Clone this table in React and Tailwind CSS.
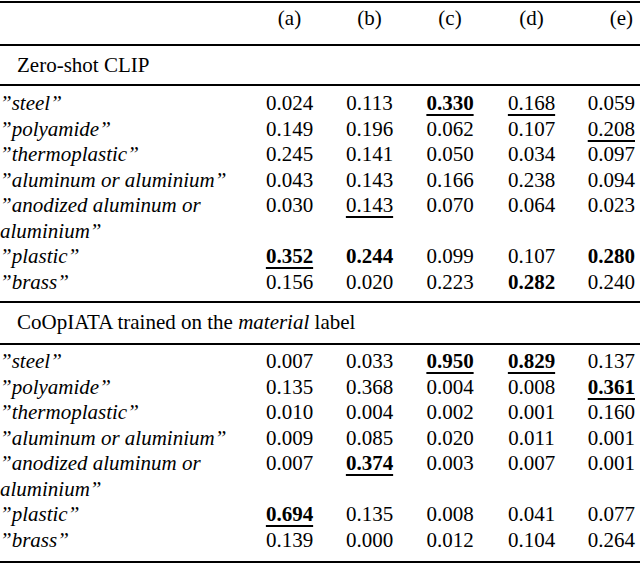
import React from "react";

const Q = "\u201D";

const zeroShot = [
  ["steel", ["0.024", "0.113", "0.330:bu", "0.168:u", "0.059"]],
  ["polyamide", ["0.149", "0.196", "0.062", "0.107", "0.208:u"]],
  ["thermoplastic", ["0.245", "0.141", "0.050", "0.034", "0.097"]],
  ["aluminum or aluminium", ["0.043", "0.143", "0.166", "0.238", "0.094"]],
  ["anodized aluminum or aluminium", ["0.030", "0.143:u", "0.070", "0.064", "0.023"]],
  ["plastic", ["0.352:bu", "0.244:b", "0.099", "0.107", "0.280:b"]],
  ["brass", ["0.156", "0.020", "0.223", "0.282:b", "0.240"]],
];

const coop = [
  ["steel", ["0.007", "0.033", "0.950:bu", "0.829:bu", "0.137"]],
  ["polyamide", ["0.135", "0.368", "0.004", "0.008", "0.361:bu"]],
  ["thermoplastic", ["0.010", "0.004", "0.002", "0.001", "0.160"]],
  ["aluminum or aluminium", ["0.009", "0.085", "0.020", "0.011", "0.001"]],
  ["anodized aluminum or aluminium", ["0.007", "0.374:bu", "0.003", "0.007", "0.001"]],
  ["plastic", ["0.694:bu", "0.135", "0.008", "0.041", "0.077"]],
  ["brass", ["0.139", "0.000", "0.012", "0.104", "0.264"]],
];

const cols = "grid grid-cols-[249px_81px_79px_82px_81px_1fr]";

const Cell = ({ raw, last }) => {
  const [v, s = ""] = raw.split(":");
  return (
    <div className={last ? "text-right pr-[5px]" : "text-center"}>
      <span
        className={`${s.includes("b") ? "font-bold" : ""} ${
          s.includes("u") ? "underline decoration-[1.5px] underline-offset-[4px]" : ""
        }`}
      >
        {v}
      </span>
    </div>
  );
};

const Rule = () => <div className="h-[2px] bg-black" />;

const Section = ({ rows, pt, pb }) => (
  <div className={`${pt} ${pb} leading-[25.5px]`}>
    {rows.map(([label, vals]) => (
      <div key={label} className={cols}>
        <div className="italic pr-2">
          {Q}
          {label}
          {Q}
        </div>
        {vals.map((v, i) => (
          <Cell key={i} raw={v} last={i === 4} />
        ))}
      </div>
    ))}
  </div>
);

export default function App() {
  return (
    <div
      className="w-[640px] h-[564px] bg-white text-black text-[21px] overflow-hidden"
      style={{ fontFamily: '"Liberation Serif", "Times New Roman", serif' }}
    >
      <div className="pt-px">
        <Rule />
      </div>
      <div className={`${cols} leading-[25px] pt-[3px] pb-[13px]`}>
        <div />
        {["(a)", "(b)", "(c)", "(d)", "(e)"].map((h, i) => (
          <div key={h} className={i === 4 ? "text-right pr-[7px]" : "text-center"}>
            {h}
          </div>
        ))}
      </div>
      <Rule />
      <div className="leading-[25px] pt-[7px] pb-[6px] pl-[17px]">Zero-shot CLIP</div>
      <Rule />
      <Section rows={zeroShot} pt="pt-[5px]" pb="pb-[6px]" />
      <Rule />
      <div className="leading-[25px] pt-[7px] pb-[8px] pl-[17px]">
        CoOpIATA trained on the <span className="italic">material</span> label
      </div>
      <Rule />
      <Section rows={coop} pt="pt-[4px]" pb="pb-[8px]" />
      <Rule />
    </div>
  );
}
